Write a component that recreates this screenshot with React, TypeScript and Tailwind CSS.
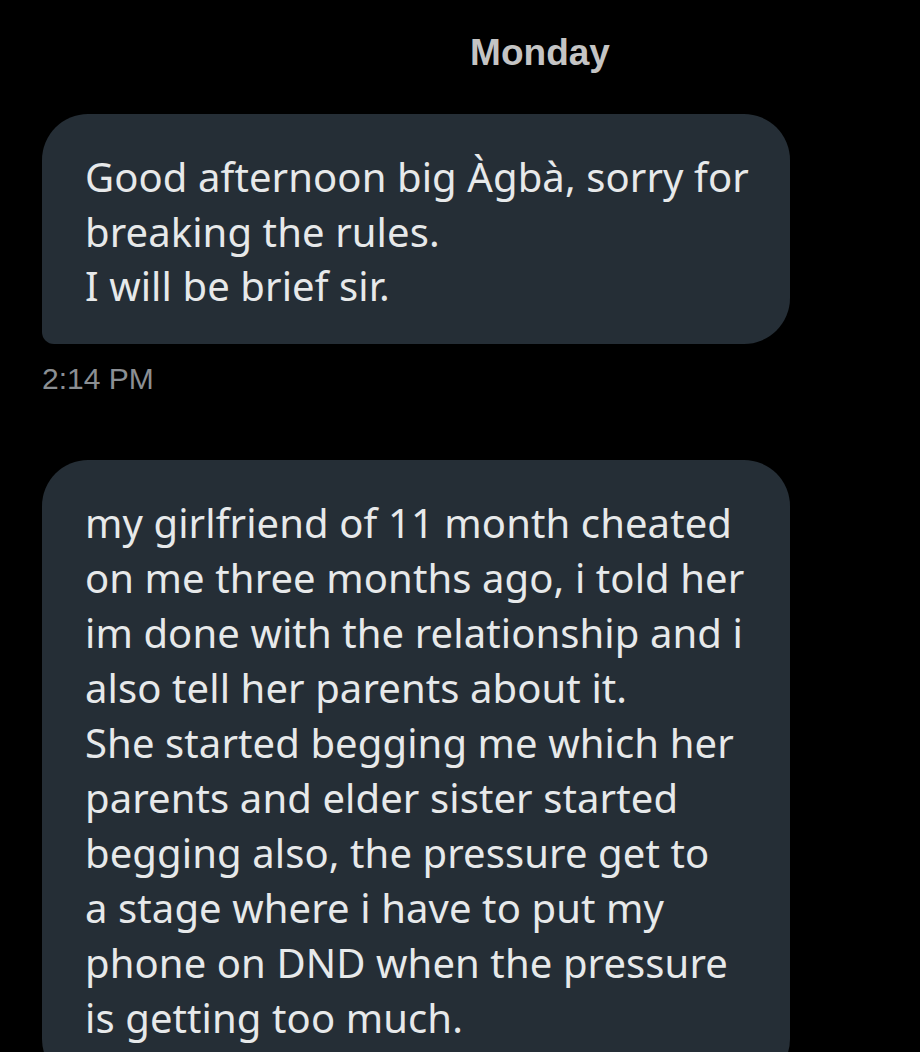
import React from "react";

const first = [
  "Good afternoon big Àgbà, sorry for",
  "breaking the rules.",
  "I will be brief sir.",
];

const second = [
  "my girlfriend of 11 month cheated",
  "on me three months ago, i told her",
  "im done with the relationship and i",
  "also tell her parents about it.",
  "She started begging me which her",
  "parents and elder sister started",
  "begging also, the pressure get to",
  "a stage where i have to put my",
  "phone on DND when the pressure",
  "is getting too much.",
];

type BubbleProps = {
  lines: string[];
  className?: string;
};

function Bubble({ lines, className }: BubbleProps) {
  return (
    <div
      className={
        "w-[748px] bg-[#252e36] rounded-[46px] rounded-bl-[12px] px-[43px] text-[#e7e9ea] text-[40px] tracking-[0.1px] font-['Noto_Sans',sans-serif] [font-variant-ligatures:none] " +
        (className ?? "")
      }
    >
      {lines.map((line, i) => (
        <div key={i} className="whitespace-nowrap">
          {line}
        </div>
      ))}
    </div>
  );
}

export default function App() {
  return (
    <div className="min-h-[1052px] h-[1052px] overflow-hidden bg-black pl-[42px] font-['Liberation_Sans',sans-serif]">
      <div className="w-[748px] flex justify-center pt-[32px] pl-[248px]">
        <span className="text-[#c4c4c4] text-[37px] leading-[42px] font-bold">Monday</span>
      </div>
      <Bubble lines={first} className="mt-[40px] pt-[36px] pb-[30px] leading-[54.5px]" />
      <div className="mt-[18px] text-[#8b8f93] text-[30px] leading-[34px]">2:14 PM</div>
      <Bubble lines={second} className="mt-[64px] pt-[35px] pb-[40px] rounded-bl-[46px] leading-[55px]" />
    </div>
  );
}
